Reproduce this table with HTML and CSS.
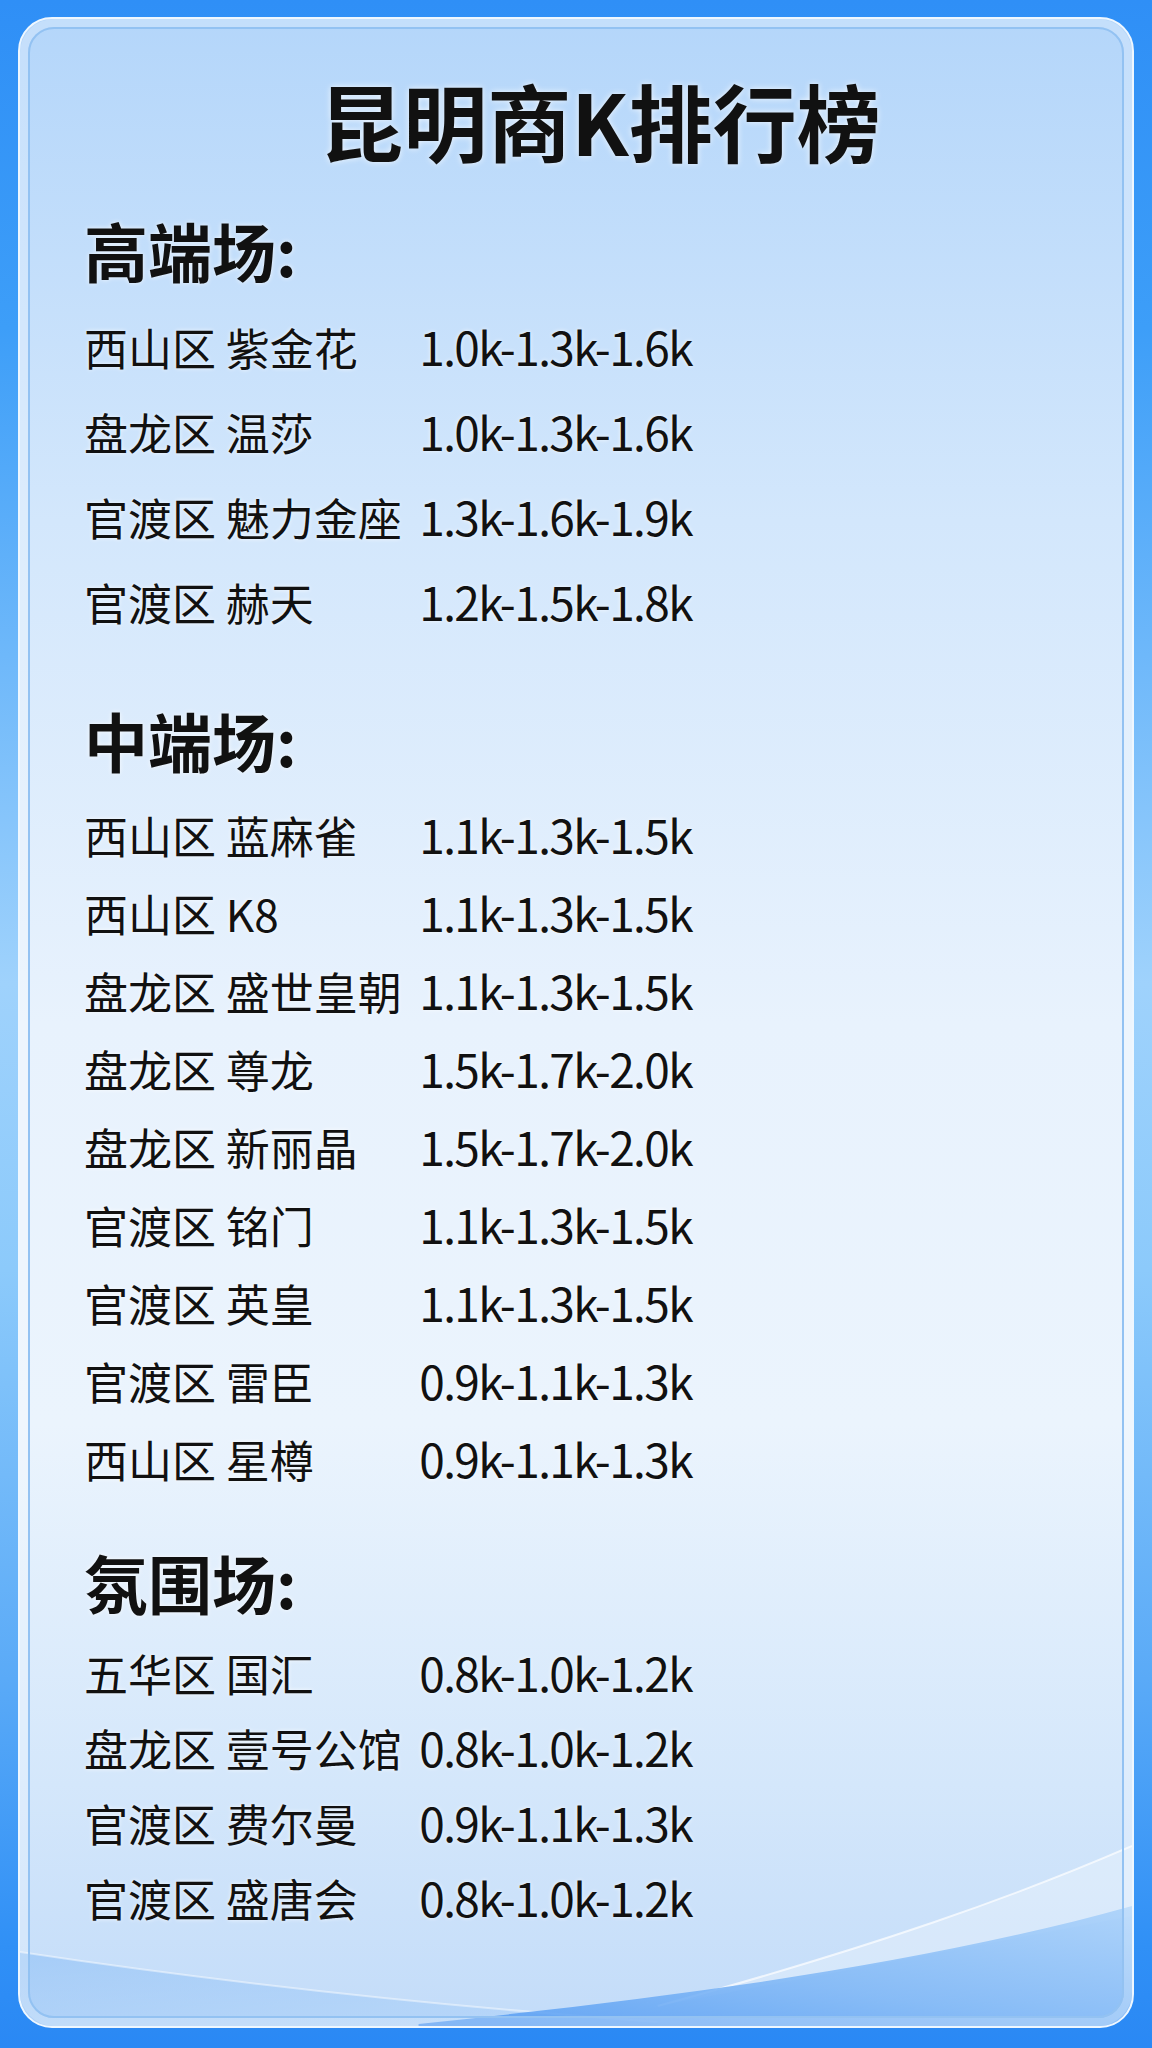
FILE: index.html
```html
<!DOCTYPE html>
<html lang="zh-CN">
<head>
    <meta charset="UTF-8">
    <meta name="viewport" content="width=device-width, initial-scale=1.0">
    <title>昆明商K排行榜</title>
    <link rel="stylesheet" href="styles.css">
</head>
<body>
    <div class="page">
        <div class="card">
            <svg class="waves" viewBox="0 0 1116 220" preserveAspectRatio="none" aria-hidden="true">
                <defs>
                    <linearGradient id="waveRight" x1="0" y1="1" x2="1" y2="0">
                        <stop offset="0" stop-color="#4f98f2"/>
                        <stop offset="0.45" stop-color="#7db6f6"/>
                        <stop offset="1" stop-color="#a9d1fa"/>
                    </linearGradient>
                    <linearGradient id="waveLeft" x1="0" y1="0" x2="1" y2="1">
                        <stop offset="0" stop-color="#8fc0f6" stop-opacity="0.6"/>
                        <stop offset="1" stop-color="#a8cff8" stop-opacity="0.4"/>
                    </linearGradient>
                </defs>
                <path d="M0 146 C 200 176, 420 200, 640 216 L 640 220 L 0 220 Z" fill="url(#waveLeft)"/>
                <path d="M0 146 C 200 176, 420 200, 640 216" fill="none" stroke="#ffffff" stroke-opacity="0.45" stroke-width="2"/>
                <path d="M1116 40 C 1000 90, 860 140, 640 200 L 1116 110 Z" fill="#ffffff" fill-opacity="0.28"/>
                <path d="M1116 40 C 1000 90, 860 140, 640 200" fill="none" stroke="#ffffff" stroke-opacity="0.7" stroke-width="2"/>
                <path d="M400 218 C 650 192, 900 160, 1116 100 L 1116 220 L 400 220 Z" fill="url(#waveRight)" fill-opacity="0.85"/>
            </svg>

            <h1 class="title">昆明商K排行榜</h1>

            <section class="section section-high">
                <h2 class="section-title">高端场:</h2>
                <ul class="rows">
                    <li class="row"><span class="name">西山区 紫金花</span><span class="price">1.0k-1.3k-1.6k</span></li>
                    <li class="row"><span class="name">盘龙区 温莎</span><span class="price">1.0k-1.3k-1.6k</span></li>
                    <li class="row"><span class="name">官渡区 魅力金座</span><span class="price">1.3k-1.6k-1.9k</span></li>
                    <li class="row"><span class="name">官渡区 赫天</span><span class="price">1.2k-1.5k-1.8k</span></li>
                </ul>
            </section>

            <section class="section section-mid">
                <h2 class="section-title">中端场:</h2>
                <ul class="rows">
                    <li class="row"><span class="name">西山区 蓝麻雀</span><span class="price">1.1k-1.3k-1.5k</span></li>
                    <li class="row"><span class="name">西山区 K8</span><span class="price">1.1k-1.3k-1.5k</span></li>
                    <li class="row"><span class="name">盘龙区 盛世皇朝</span><span class="price">1.1k-1.3k-1.5k</span></li>
                    <li class="row"><span class="name">盘龙区 尊龙</span><span class="price">1.5k-1.7k-2.0k</span></li>
                    <li class="row"><span class="name">盘龙区 新丽晶</span><span class="price">1.5k-1.7k-2.0k</span></li>
                    <li class="row"><span class="name">官渡区 铭门</span><span class="price">1.1k-1.3k-1.5k</span></li>
                    <li class="row"><span class="name">官渡区 英皇</span><span class="price">1.1k-1.3k-1.5k</span></li>
                    <li class="row"><span class="name">官渡区 雷臣</span><span class="price">0.9k-1.1k-1.3k</span></li>
                    <li class="row"><span class="name">西山区 星樽</span><span class="price">0.9k-1.1k-1.3k</span></li>
                </ul>
            </section>

            <section class="section section-low">
                <h2 class="section-title">氛围场:</h2>
                <ul class="rows">
                    <li class="row"><span class="name">五华区 国汇</span><span class="price">0.8k-1.0k-1.2k</span></li>
                    <li class="row"><span class="name">盘龙区 壹号公馆</span><span class="price">0.8k-1.0k-1.2k</span></li>
                    <li class="row"><span class="name">官渡区 费尔曼</span><span class="price">0.9k-1.1k-1.3k</span></li>
                    <li class="row"><span class="name">官渡区 盛唐会</span><span class="price">0.8k-1.0k-1.2k</span></li>
                </ul>
            </section>
        </div>
    </div>
</body>
</html>
```

FILE: styles.css
```css
body { margin: 0; font-family: "Noto Sans CJK SC", "Noto Sans", sans-serif; color: #111; }
.page { box-sizing: border-box; height: 2048px; padding: 17px 18px 20px; background: linear-gradient(to bottom, #2f8ff6 0%, #3d9ef8 16%, #9fd2fc 48%, #8ccafb 62%, #5aaaf7 82%, #3090f6 95%, #2a88f4 100%); }
.card { box-sizing: border-box; position: relative; height: 2011px; padding: 51px 0 0 64px; border: 2px solid #eef7ff; border-radius: 34px; overflow: hidden; background: linear-gradient(to bottom, #b4d6fa 0%, #d3e7fc 25%, #e8f2fd 50%, #ebf4fd 70%, #d4e7fb 88%, #c3dcf9 100%); }
.card::before { content: ""; position: absolute; inset: 8px; border: 2px solid #93c2f2; border-radius: 26px; box-shadow: 0 0 0 8px rgba(255, 255, 255, 0.22); pointer-events: none; z-index: 2; }
.waves { position: absolute; left: 0; bottom: 0; width: 100%; height: 220px; z-index: 1; }

.title { margin: 0; padding-right: 16px; font-size: 84px; line-height: 100px; font-weight: 700; text-align: center; white-space: nowrap; text-shadow: 0 0 6px rgba(255, 255, 255, 0.8); position: relative; z-index: 3; }

.section { position: relative; z-index: 3; }
.section-high { margin-top: 41px; }
.section-mid { margin-top: 57px; }
.section-low { margin-top: 46px; }
.section-title { margin: 0; font-size: 64px; line-height: 76px; font-weight: 700; text-shadow: 0 0 5px rgba(255, 255, 255, 0.8); }

.rows { list-style: none; margin: 17px 0 0; padding: 0; width: 608px; }
.section-mid .rows { margin-top: 18px; }
.section-low .rows { margin-top: 16px; }
.row { display: flex; justify-content: space-between; align-items: baseline; height: 85px; line-height: 85px; white-space: nowrap; text-shadow: 0 0 4px rgba(255, 255, 255, 0.8); }
.section-mid .row { height: 78px; line-height: 78px; }
.section-low .row { height: 75px; line-height: 75px; }
.name { font-size: 44px; }
.price { font-size: 46px; letter-spacing: -1.6px; }
```
